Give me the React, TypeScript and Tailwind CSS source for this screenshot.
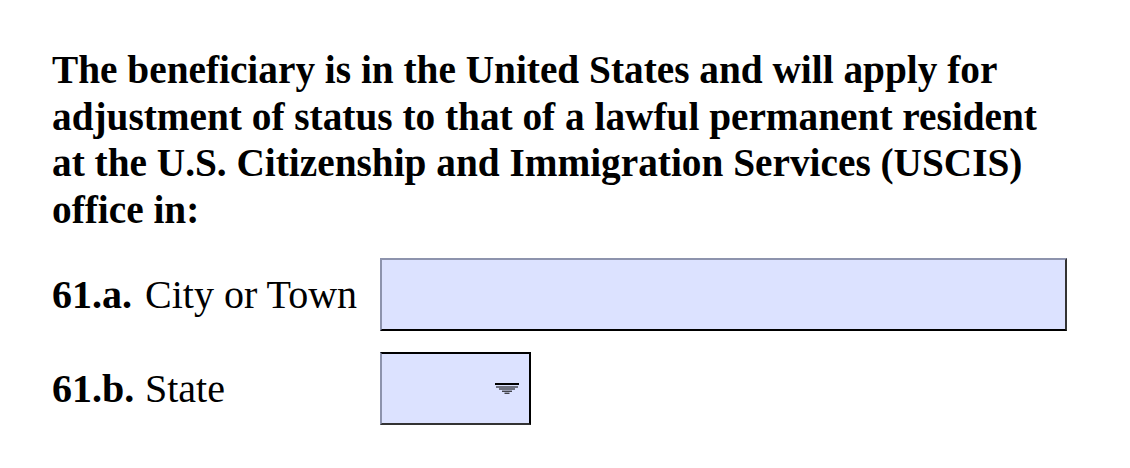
function DropArrow() {
  return (
    <svg width="24" height="11" viewBox="0 0 24 11" className="block">
      <rect x="0" y="0" width="24" height="2" fill="#000" />
      <rect x="1" y="3.5" width="22" height="1" fill="#000" />
      <rect x="4" y="5.5" width="16" height="1" fill="#000" />
      <rect x="7" y="7.7" width="10" height="1" fill="#000" />
      <rect x="9.5" y="9.7" width="5" height="1" fill="#000" />
    </svg>
  );
}

export default function App() {
  return (
    <div className="w-[1130px] h-[468px] bg-white pl-[52px] pt-[47px] text-black [font-family:'Liberation_Serif',serif]">
      <p className="text-[39.3px] font-bold leading-[46.5px] whitespace-nowrap">
        The beneficiary is in the United States and will apply for
        <br />
        adjustment of status to that of a lawful permanent resident
        <br />
        at the U.S. Citizenship and Immigration Services (USCIS)
        <br />
        office in:
      </p>
      <div className="mt-[25px] flex items-center">
        <div className="w-[328px] text-[40px] leading-none">
          <span className="inline-block w-[93px] font-bold">61.a.</span>City or Town
        </div>
        <div className="h-[73px] w-[687px] bg-[#dce2ff] border-t-2 border-l-2 border-t-[#8d93ad] border-l-[#8d93ad] border-b-2 border-r-2 border-b-black border-r-[#333]" />
      </div>
      <div className="mt-[21px] flex items-center">
        <div className="w-[328px] text-[40px] leading-none">
          <span className="inline-block w-[93px] font-bold">61.b.</span>State
        </div>
        <div className="h-[73px] w-[151px] bg-[#dce2ff] border-t-2 border-r-2 border-t-black border-r-black border-l-2 border-b-2 border-l-[#8d93ad] border-b-[#333] flex items-center justify-end pr-[10px]">
          <DropArrow />
        </div>
      </div>
    </div>
  );
}
